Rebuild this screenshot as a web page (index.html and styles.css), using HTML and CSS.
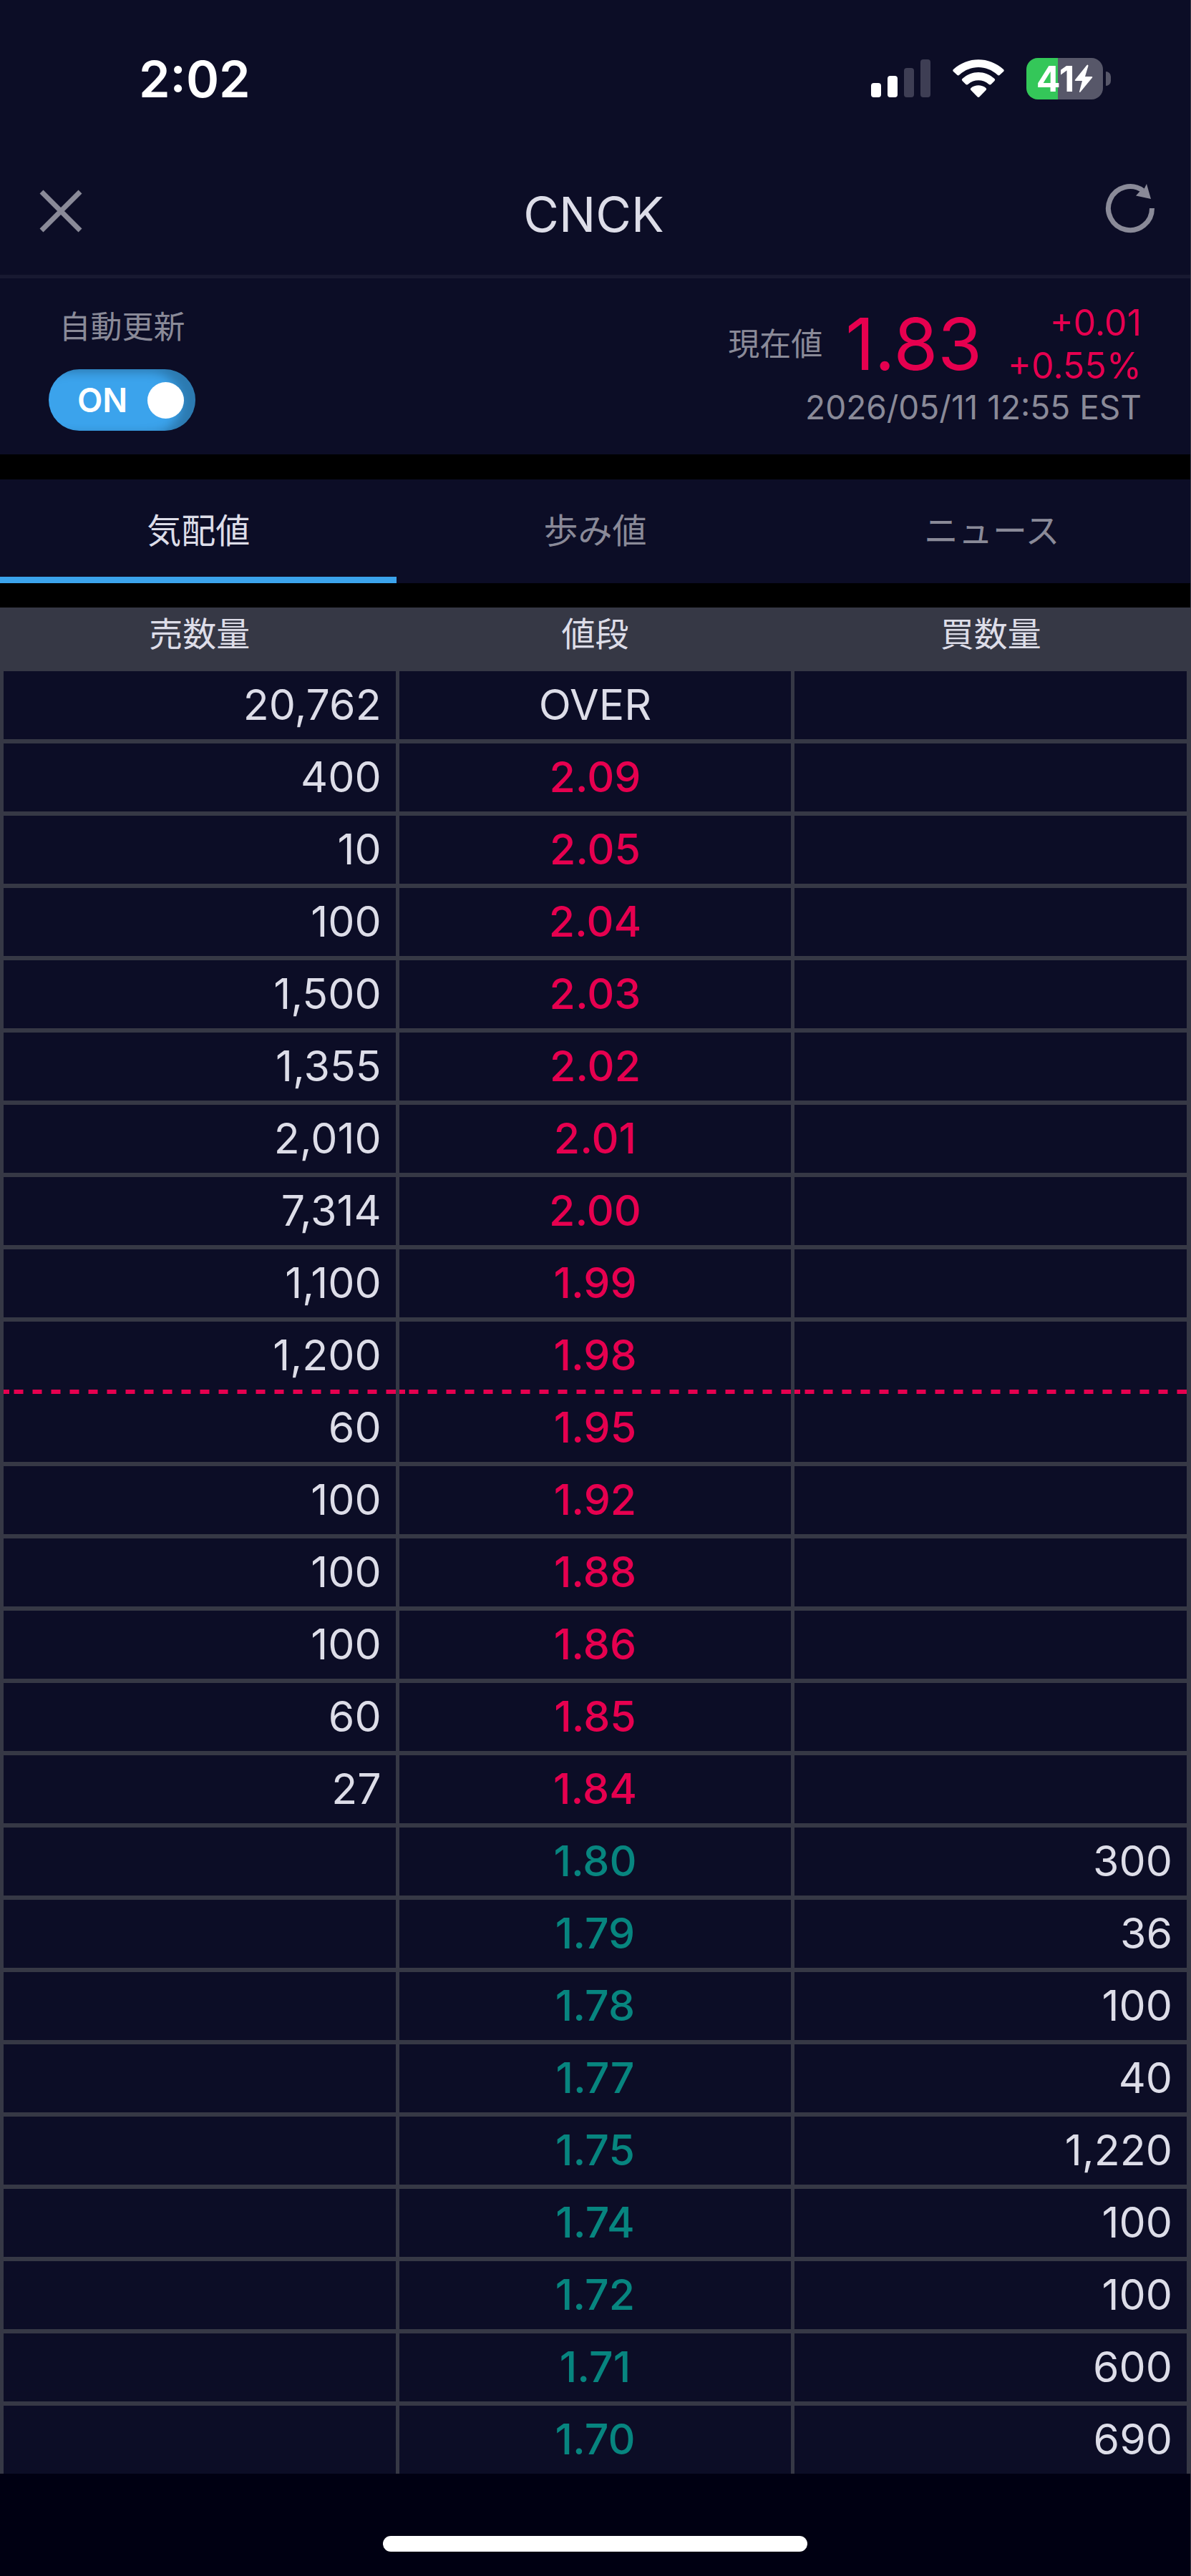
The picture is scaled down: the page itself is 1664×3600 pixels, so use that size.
FILE: index.html
```html
<!DOCTYPE html>
<html lang="ja">
<head>
  <meta charset="UTF-8">
  <meta name="viewport" content="width=device-width, initial-scale=1.0">
  <title>CNCK 気配値</title>
  <link rel="stylesheet" href="styles.css">
</head>
<body>
  <div class="status-bar">
    <span class="clock">2:02</span>
    <div class="status-icons">
      <svg class="signal" width="83" height="54" viewBox="0 0 83 54">
        <rect x="0" y="33" width="14" height="20" rx="4" fill="#fff"/>
        <rect x="23" y="23" width="14" height="30" rx="4" fill="#fff"/>
        <rect x="46" y="12" width="14" height="41" rx="4" fill="#3e3e54"/>
        <rect x="69" y="0" width="14" height="53" rx="4" fill="#3e3e54"/>
      </svg>
      <svg class="wifi" width="72" height="54" viewBox="0 0 72 54" fill="#fff">
        <path d="M1 14 Q-0.500 15.500 1 17 L6.500 22 Q8 23 9.500 21.500 C25 7.500 47 7.500 62.500 21.500 Q64 23 65.500 22 L71 17 Q72.500 15.500 71 14 C51 -4.500 21 -4.500 1 14Z"/>
        <path d="M13.500 27 Q12 28.500 13.500 30 L18.500 35 Q20 36 21.500 34.800 C30 27.500 42 27.500 50.500 34.800 Q52 36 53.500 35 L58.500 30 Q60 28.500 58.500 27 C45 15 27 15 13.500 27Z"/>
        <path d="M25.500 40 Q24 41.500 25.500 43 L34.500 52.300 Q36 53.600 37.500 52.300 L46.500 43 Q48 41.500 46.500 40 C40.500 35 31.500 35 25.500 40Z"/>
      </svg>
      <div class="battery">
        <div class="battery-body">
          <span>41</span>
          <svg width="26" height="40" viewBox="0 0 26 40" fill="#fff">
            <path d="M17.500 1 L1 21.500 Q0 23 2 23 H11 L7 38 Q7 39.800 8.500 38.500 L25 18.500 Q26 17 24 17 H15 L19.500 2 Q19.300 -0.500 17.500 1Z"/>
          </svg>
        </div>
        <div class="battery-cap"></div>
      </div>
    </div>
  </div>

  <header class="title-bar">
    <button class="icon-button" aria-label="閉じる">
      <svg width="60" height="60" viewBox="0 0 60 60" fill="none" stroke="#8a8a98" stroke-width="7">
        <path d="M3 3 L57 57 M57 3 L3 57"/>
      </svg>
    </button>
    <h1>CNCK</h1>
    <button class="icon-button" aria-label="更新">
      <svg width="70" height="78" viewBox="0 0 70 78">
        <path d="M65.500 35 A30.500 30.500 0 1 1 53 10.500" fill="none" stroke="#8a8a98" stroke-width="7"/>
        <path d="M58 1 L64 22 L43 17.500 L48 12 L54 9 Z" fill="#8a8a98"/>
      </svg>
    </button>
  </header>

  <section class="summary">
    <div class="auto-update">
      <label for="auto-update">自動更新</label>
      <label class="switch"><span>ON</span><input type="checkbox" id="auto-update" checked></label>
    </div>
    <div class="quote">
      <div class="quote-main">
        <span class="quote-label">現在値</span>
        <span class="quote-price">1.83</span>
        <div class="quote-change">
          <span>+0.01</span>
          <span>+0.55%</span>
        </div>
      </div>
      <div class="quote-time">2026/05/11 12:55 EST</div>
    </div>
  </section>

  <nav class="tabs">
    <a href="#board" class="tab active">気配値</a>
    <a href="#ticks" class="tab">歩み値</a>
    <a href="#news" class="tab">ニュース</a>
  </nav>

  <table class="board" id="board">
    <thead>
      <tr><th>売数量</th><th>値段</th><th>買数量</th></tr>
    </thead>
    <tbody class="asks">
      <tr><td>20,762</td><td class="over">OVER</td><td></td></tr>
      <tr><td>400</td><td>2.09</td><td></td></tr>
      <tr><td>10</td><td>2.05</td><td></td></tr>
      <tr><td>100</td><td>2.04</td><td></td></tr>
      <tr><td>1,500</td><td>2.03</td><td></td></tr>
      <tr><td>1,355</td><td>2.02</td><td></td></tr>
      <tr><td>2,010</td><td>2.01</td><td></td></tr>
      <tr><td>7,314</td><td>2.00</td><td></td></tr>
      <tr><td>1,100</td><td>1.99</td><td></td></tr>
      <tr class="limit"><td>1,200</td><td>1.98</td><td></td></tr>
      <tr><td>60</td><td>1.95</td><td></td></tr>
      <tr><td>100</td><td>1.92</td><td></td></tr>
      <tr><td>100</td><td>1.88</td><td></td></tr>
      <tr><td>100</td><td>1.86</td><td></td></tr>
      <tr><td>60</td><td>1.85</td><td></td></tr>
      <tr><td>27</td><td>1.84</td><td></td></tr>
    </tbody>
    <tbody class="bids">
      <tr><td></td><td>1.80</td><td>300</td></tr>
      <tr><td></td><td>1.79</td><td>36</td></tr>
      <tr><td></td><td>1.78</td><td>100</td></tr>
      <tr><td></td><td>1.77</td><td>40</td></tr>
      <tr><td></td><td>1.75</td><td>1,220</td></tr>
      <tr><td></td><td>1.74</td><td>100</td></tr>
      <tr><td></td><td>1.72</td><td>100</td></tr>
      <tr><td></td><td>1.71</td><td>600</td></tr>
      <tr><td></td><td>1.70</td><td>690</td></tr>
    </tbody>
  </table>

  <footer class="home-area">
    <div class="home-indicator"></div>
  </footer>
</body>
</html>
```

FILE: styles.css
```css
* {
  box-sizing: border-box;
}

body {
  margin: 0;
  min-height: 100vh;
  display: flex;
  flex-direction: column;
  background: #000;
  border-right: 1px solid #363845;
  color: #dddde8;
  font-family: Inter, 'Noto Sans CJK JP', sans-serif;
}

.status-bar {
  display: flex;
  justify-content: space-between;
  align-items: center;
  height: 220px;
  padding: 0 111px 0 194px;
  background: #0c0d26;
  color: #fff;
}

.clock {
  font-size: 70px;
  font-weight: 600;
}

.status-icons {
  display: flex;
  align-items: center;
  gap: 31px;
}

.battery {
  display: flex;
  align-items: center;
  gap: 4px;
}

.battery-body {
  display: flex;
  align-items: center;
  justify-content: center;
  width: 107px;
  height: 58px;
  border-radius: 16px;
  background: linear-gradient(90deg, #34c759 41%, #575769 41%);
  font-size: 50px;
  font-weight: 700;
}

.battery-cap {
  width: 7px;
  height: 20px;
  border-radius: 0 10px 10px 0;
  background: #575769;
}

.title-bar {
  display: flex;
  justify-content: space-between;
  align-items: center;
  height: 169px;
  padding: 0 49px 15px 55px;
  background: #0c0d26;
  border-bottom: 5px solid #181931;
}

.title-bar h1 {
  margin: 0;
  padding-top: 8px;
  font-size: 68px;
  font-weight: 400;
}

.icon-button {
  padding: 0;
  border: none;
  background: none;
  cursor: pointer;
}

.icon-button svg {
  display: block;
}

.summary {
  display: flex;
  justify-content: space-between;
  height: 246px;
  padding: 32px 68px 0;
  background: #0c0d26;
  color: #8a8a98;
}

.auto-update {
  display: flex;
  flex-direction: column;
  align-items: center;
  gap: 31px;
  padding-top: 8px;
  font-size: 44px;
  line-height: 56px;
}

.switch {
  display: flex;
  align-items: center;
  justify-content: space-between;
  width: 205px;
  height: 86px;
  padding: 0 16px 0 40px;
  border-radius: 43px;
  background: #3ba3ec;
  box-shadow: inset -20px 4px 14px rgba(0, 0, 0, 0.25);
  color: #fff;
  font-size: 46px;
  font-weight: 600;
  cursor: pointer;
}

.switch input {
  appearance: none;
  width: 51px;
  height: 51px;
  margin: 0;
  border-radius: 50%;
  background: #fff;
}

.quote {
  display: flex;
  flex-direction: column;
  align-items: flex-end;
}

.quote-main {
  display: flex;
  align-items: center;
}

.quote-label {
  margin-right: 32px;
  font-size: 44px;
  line-height: 56px;
}

.quote-price {
  margin-right: 36px;
  color: #e6004f;
  font-size: 100px;
  line-height: 120px;
}

.quote-change {
  display: flex;
  flex-direction: column;
  align-items: flex-end;
  color: #e6004f;
  font-size: 50px;
  line-height: 60px;
}

.quote-time {
  font-size: 46px;
  line-height: 56px;
}

.tabs {
  display: flex;
  height: 145px;
  margin: 35px 0 34px;
  background: #0c0d26;
}

.tab {
  flex: 1;
  display: flex;
  align-items: center;
  justify-content: center;
  border-bottom: 9px solid transparent;
  color: #8a8a98;
  font-size: 48px;
  text-decoration: none;
}

.tab.active {
  border-color: #3ba3ec;
  color: #dddde8;
}

.board {
  width: 100%;
  table-layout: fixed;
  border-collapse: collapse;
  background: #0c0d26;
}

.board th {
  height: 89px;
  padding: 0 0 16px;
  border: solid #363845;
  border-width: 0 5px;
  background: #363845;
  font-size: 47px;
  font-weight: 400;
  line-height: 70px;
}

.board td {
  box-sizing: content-box;
  height: 93px;
  padding: 0 20px 2px;
  border: 5px solid #363845;
  border-width: 6px 5px;
  font-size: 59px;
  line-height: 72px;
  text-align: right;
}

.board tbody td:nth-child(2) {
  font-weight: 500;
  text-align: center;
}

.asks td:nth-child(2) {
  color: #e6004f;
}

.bids td:nth-child(2) {
  color: #07857f;
}

.board tbody td.over {
  color: #dddde8;
  font-weight: 400;
}

/* dashed price limit line, closed off with a short dash at both cell edges */
.asks .limit td {
  padding-bottom: 8px;
  border-bottom: none;
  background:
    linear-gradient(#e6004f, #e6004f) left bottom / 8px 6px no-repeat,
    linear-gradient(#e6004f, #e6004f) right bottom / 8px 6px no-repeat,
    linear-gradient(90deg, #e6004f 50%, transparent 50%) 14px bottom / 26px 6px repeat-x;
}

.asks .limit + tr td,
.asks tr:first-child td {
  border-top: none;
}

.bids tr:last-child td {
  border-bottom: none;
}

.home-area {
  flex: 1;
  display: flex;
  justify-content: center;
  align-items: flex-end;
  min-height: 140px;
  padding-bottom: 34px;
  background: #000012;
}

.home-indicator {
  width: 593px;
  height: 22px;
  border-radius: 11px;
  background: #fff;
}
```
